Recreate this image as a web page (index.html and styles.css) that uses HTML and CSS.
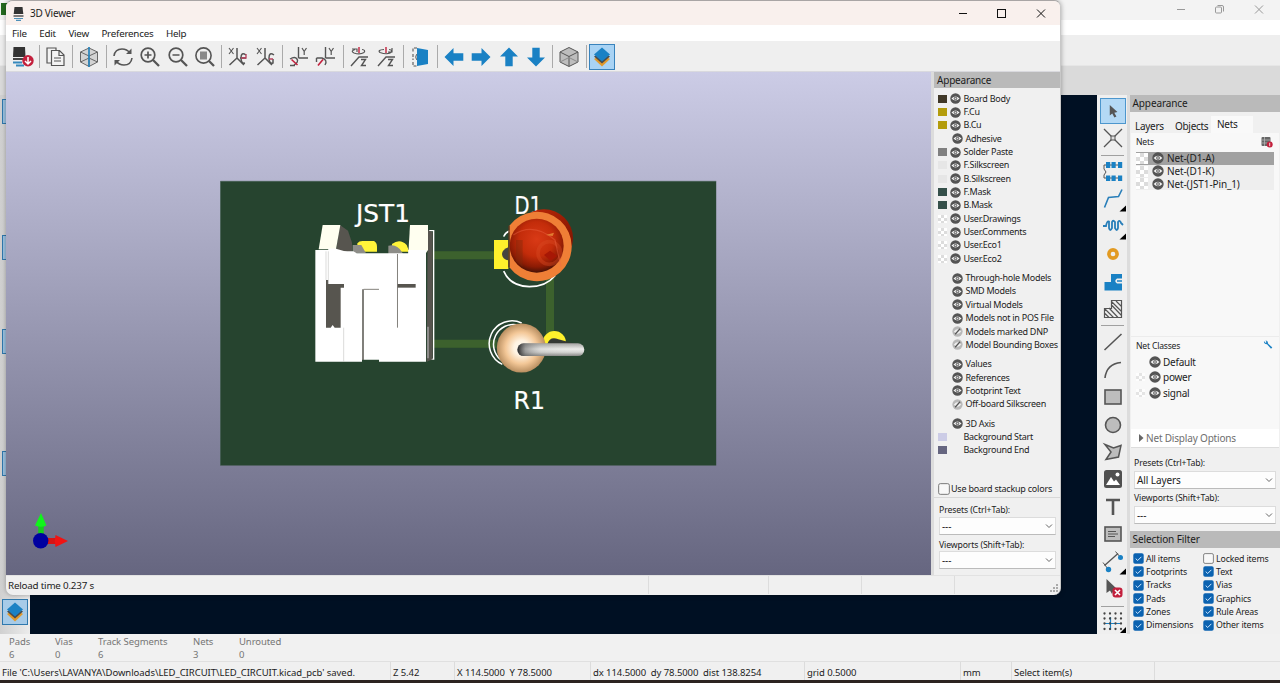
FILE: index.html
```html
<!DOCTYPE html>
<html lang="en">
<head>
<meta charset="utf-8">
<title>3D Viewer</title>
<link rel="stylesheet" href="styles.css">
</head>
<body>
<svg class="defs" width="0" height="0">
  <defs>
    <symbol id="eye" viewBox="0 0 12 12"><circle cx="6" cy="6" r="5.7" fill="#545454"/><path d="M1.6 6Q6 1.4 10.4 6Q6 10.6 1.6 6Z" fill="#f4f4f4"/><circle cx="6" cy="6" r="2" fill="#777"/><circle cx="6" cy="6" r=".8" fill="#ddd"/></symbol>
    <symbol id="off" viewBox="0 0 12 12"><circle cx="6" cy="6" r="5.6" fill="#b9b9b9"/><path d="M2 6Q6 1 10 6Q6 11 2 6Z" fill="#eee"/><path d="M3.400 9L8.800 3" stroke="#555" stroke-width="1.300"/></symbol>
    <symbol id="layers" viewBox="0 0 22 22"><path d="M3 13L11 20.500L19 13L11 8Z" fill="#e29a2c"/><path d="M3 10.500L11 17.500L19 10.500L11 6Z" fill="#4b4b4b"/><path d="M3 8.500L11 1.500L19 8.500L11 15.500Z" fill="#1a81c4"/></symbol>
    <symbol id="chev" viewBox="0 0 8 8"><path d="M1 2.500L4 5.500L7 2.500" fill="none" stroke="#666" stroke-width="1"/></symbol>
    <symbol id="tick" viewBox="0 0 11 11"><rect x=".3" y=".3" width="10.400" height="10.400" rx="1.800" fill="#0b62b0"/><path d="M2.700 5.600L4.700 7.500L8.400 3.800" fill="none" stroke="#d4eaff" stroke-width="1"/></symbol>
    <symbol id="box" viewBox="0 0 11 11"><rect x=".6" y=".6" width="9.800" height="9.800" rx="1.500" fill="#f8f8f8" stroke="#777" stroke-width=".9"/></symbol>
    <symbol id="arrow" viewBox="0 0 22 22"><path d="M1.500 11L10.500 2V7.300H20.300V14.700H10.500V20Z" fill="#1a81c4"/></symbol>
    <linearGradient id="bg" x1="0" y1="0" x2="0" y2="1"><stop offset="0" stop-color="#cccce6"/><stop offset="1" stop-color="#666680"/></linearGradient>
    <radialGradient id="dome" cx=".5" cy=".38" r=".64"><stop offset="0" stop-color="#d93a16"/><stop offset=".5" stop-color="#c32c0a"/><stop offset=".8" stop-color="#8c1b04"/><stop offset="1" stop-color="#3a1006"/></radialGradient>
    <linearGradient id="back" x1="0" y1="0" x2="1" y2="1"><stop offset="0" stop-color="#c62a08"/><stop offset="1" stop-color="#701000"/></linearGradient>
    <radialGradient id="res"><stop offset="0" stop-color="#fffaf0"/><stop offset=".3" stop-color="#fff3e2"/><stop offset=".65" stop-color="#f3c797"/><stop offset="1" stop-color="#b88e60"/></radialGradient>
    <linearGradient id="lead" x1="0" y1="0" x2="0" y2="1"><stop offset="0" stop-color="#a2a2a0"/><stop offset=".45" stop-color="#ececea"/><stop offset=".7" stop-color="#d4d4d2"/><stop offset="1" stop-color="#858583"/></linearGradient>
    <linearGradient id="leadend" x1="0" y1="0" x2="1" y2="0"><stop offset="0" stop-color="#222"/><stop offset=".12" stop-color="#555" stop-opacity=".5"/><stop offset=".35" stop-color="#999" stop-opacity=".15"/><stop offset="1" stop-color="#fff" stop-opacity="0"/></linearGradient>
  </defs>
</svg>

<div class="editor">
  <div class="ed-title">
    <svg width="100" height="19" viewBox="0 0 100 19" fill="none" stroke="#999" stroke-width="1"><path d="M7 9.500h8M85 5.500l8 8M93 5.500l-8 8"/><rect x="45.500" y="7" width="6" height="6" rx="1"/><path d="M47.500 5.500h4.500q1.500 0 1.500 1.500v4.500"/></svg>
  </div>
  <div class="ed-menu"></div>
  <div class="ed-tools"></div>
  <div class="ed-band"></div>
  <div class="ed-body">
    <div class="ed-left"><i></i><i></i><i></i><i></i><b><svg width="22" height="22"><use href="#layers"/></svg></b></div>
    <div class="ed-canvas"></div>
    <div class="ed-right">
      <svg class="on" viewBox="0 0 26 26"><path d="M9.500 6.500V18L12.200 15.700L14.500 20L16.700 19L14.400 14.800L17.800 14Z" fill="#555"/></svg>
      <svg viewBox="0 0 26 26"><path d="M4 4L22 22M22 4L4 22" stroke="#555" stroke-width="1.300"/><rect x="11" y="11" width="4" height="4" fill="#ddd" stroke="#555"/></svg>
      <hr>
      <svg viewBox="0 0 26 26"><path d="M6 6H4V10L6 13L4 16V19H6M10 6h9M10 19h9" fill="none" stroke="#555" stroke-width="1"/><path d="M6 3h4.200v6h-4.200zM11.500 3h4.200v6h-4.200zM18 3h4.200v6h-4.200zM6 16.500h4.200v5.500h-4.200zM11.500 16.500h4.200v5.500h-4.200zM18 16.500h4.200v5.500h-4.200z" fill="#1a81c4"/></svg>
      <svg viewBox="0 0 26 26"><path d="M4.500 21.500L8.500 11.500L18.500 10.500L22 3.500" fill="none" stroke="#287eb9" stroke-width="1.600"/><path d="M26 19.500V25.500H19.500Z" fill="#000"/></svg>
      <svg viewBox="0 0 26 26"><path d="M3 12H6Q7 6.500 9 7.500V14Q10 18 12 14V8Q13 5.500 15 8V14Q17 18 18 14V8Q20 5.500 21 9L23 11" fill="none" stroke="#287eb9" stroke-width="1.800"/><path d="M26 19.500V25.500H19.500Z" fill="#000"/></svg>
      <svg viewBox="0 0 26 26"><circle cx="13" cy="13" r="4.100" fill="none" stroke="#e29a22" stroke-width="3.600"/></svg>
      <svg viewBox="0 0 26 26"><path d="M4.500 13H11V5H22V9.500H17Q13.500 12 17 14.500H22V21.500H4.500Z" fill="#1a81c4"/><path d="M17 12h5" stroke="#1a81c4" stroke-width="1.500"/></svg>
      <svg viewBox="0 0 26 26"><path d="M5 13l8.500 8.500M5 17.500l4 4M11.500 5.500L21.500 15.500M16 5l5.500 5.500M12 9.500l9.500 10M9 12l9 9.500M4.500 12.500H11.500V4.500H21.500V21.500H4.500Z" fill="none" stroke="#555" stroke-width="1.200"/></svg>
      <hr>
      <svg viewBox="0 0 26 26"><path d="M4.500 21L21.500 5" stroke="#555" stroke-width="1.600"/></svg>
      <svg viewBox="0 0 26 26"><path d="M5 21Q6.500 7 21 5.500" fill="none" stroke="#555" stroke-width="1.600"/></svg>
      <svg viewBox="0 0 26 26"><rect x="5" y="6" width="16" height="14" fill="#bdbdbd" stroke="#555" stroke-width="1.600"/></svg>
      <svg viewBox="0 0 26 26"><circle cx="13" cy="13" r="7.500" fill="#bdbdbd" stroke="#555" stroke-width="1.600"/></svg>
      <svg viewBox="0 0 26 26"><path d="M5 5.500L13.500 9L21 6.500L18.500 18L6 20.500L11 13Z" fill="#bdbdbd" stroke="#555" stroke-width="1.500"/></svg>
      <svg viewBox="0 0 26 26"><rect x="4" y="4" width="18" height="18" rx="2.500" fill="#505050"/><path d="M6 19L11 11L14 15.500L16 13.500L20 19Z" fill="#fff"/><circle cx="17.500" cy="8.500" r="2" fill="#fff"/></svg>
      <svg viewBox="0 0 26 26"><path d="M6 6H20M13 6V21" stroke="#555" stroke-width="2.600"/></svg>
      <svg viewBox="0 0 26 26"><rect x="5" y="6" width="16" height="14" fill="#bdbdbd" stroke="#555" stroke-width="1.600"/><path d="M8 10.500h8M8 13h10M8 15.500h7" stroke="#555"/></svg>
      <svg viewBox="0 0 26 26"><path d="M4.500 16.500L18 4.500" stroke="#555" stroke-width="1.400"/><path d="M3 13.500L8 20M15.500 2.500L21 9" stroke="#555"/><circle cx="8.500" cy="20.500" r="2.700" fill="#1a81c4"/><circle cx="20.500" cy="8.500" r="2.500" fill="#1a81c4"/><path d="M26 19.500V25.500H19.500Z" fill="#000"/></svg>
      <svg viewBox="0 0 26 26"><path d="M6.500 3V17L10 14.500L12 18L14 13H17Z" fill="#555"/><rect x="12.500" y="11.500" width="10" height="10" rx="3" fill="#c3203d"/><path d="M15 14l5 5M20 14l-5 5" stroke="#fff" stroke-width="1.600"/></svg>
      <hr>
      <svg viewBox="0 0 26 26"><path d="M10.500 7V20M5 13.500H21" stroke="#1a81c4" stroke-width="1.200"/><path d="M4.500 3.500H24M4.500 8.500H24M4.500 13.500H24M4.500 19H24" stroke="#444" stroke-width="2.300" stroke-linecap="round" stroke-dasharray="0 5.500"/><path d="M26 17V23H20Z" fill="#000"/></svg>
    </div>
    <div class="ed-panel">
      <div class="head">Appearance</div>
      <div class="tabs"><span>Layers</span><span>Objects</span><span class="sel">Nets</span></div>
      <div class="page">
        <div class="sub"><span>Nets</span><svg width="12" height="12" viewBox="0 0 12 12"><rect x=".5" y="1" width="9" height="9" rx="1" fill="#666"/><path d="M1 4h8M1 7h8M3.500 1v9" stroke="#bbb" stroke-width=".7"/><circle cx="8.700" cy="8.500" r="3" fill="#c3203d"/><path d="M8.700 6.800v3.400" stroke="#fff" stroke-width=".8"/></svg></div>
        <div class="nets">
          <div class="net cur"><i class="chk"></i><svg><use href="#eye"/></svg><span>Net-(D1-A)</span></div>
          <div class="net"><i class="chk"></i><svg><use href="#eye"/></svg><span>Net-(D1-K)</span></div>
          <div class="net"><i class="chk"></i><svg><use href="#eye"/></svg><span>Net-(JST1-Pin_1)</span></div>
        </div>
        <div class="classes">
          <div class="sub"><span>Net Classes</span><svg width="10" height="10" viewBox="0 0 10 10"><path d="M1 1Q.5 4 4 4.300L8 8.700L9.300 7.500L5 3.500Q5 .8 2.500.6L3.500 2L2.500 3Z" fill="#1a81c4"/></svg></div>
          <div class="cls"><i></i><svg><use href="#eye"/></svg><span>Default</span></div>
          <div class="cls"><i class="chk"></i><svg><use href="#eye"/></svg><span>power</span></div>
          <div class="cls"><i class="chk"></i><svg><use href="#eye"/></svg><span>signal</span></div>
        </div>
        <div class="ndo"><svg width="5" height="8"><path d="M0 0L4.500 4L0 8Z" fill="#666"/></svg><span>Net Display Options</span></div>
      </div>
      <div class="fields">
        <label>Presets (Ctrl+Tab):</label>
        <div class="combo"><span>All Layers</span><svg><use href="#chev"/></svg></div>
        <label>Viewports (Shift+Tab):</label>
        <div class="combo"><span>---</span><svg><use href="#chev"/></svg></div>
      </div>
      <div class="head filt">Selection Filter</div>
      <div class="checks">
        <div><svg><use href="#tick"/></svg>All items</div><div><svg><use href="#box"/></svg>Locked items</div>
        <div><svg><use href="#tick"/></svg>Footprints</div><div><svg><use href="#tick"/></svg>Text</div>
        <div><svg><use href="#tick"/></svg>Tracks</div><div><svg><use href="#tick"/></svg>Vias</div>
        <div><svg><use href="#tick"/></svg>Pads</div><div><svg><use href="#tick"/></svg>Graphics</div>
        <div><svg><use href="#tick"/></svg>Zones</div><div><svg><use href="#tick"/></svg>Rule Areas</div>
        <div><svg><use href="#tick"/></svg>Dimensions</div><div><svg><use href="#tick"/></svg>Other items</div>
      </div>
    </div>
  </div>
  <div class="stats">
    <div>Pads<b>6</b></div><div>Vias<b>0</b></div><div>Track Segments<b>6</b></div><div>Nets<b>3</b></div><div>Unrouted<b>0</b></div>
  </div>
  <div class="status">
    <span class="file">File 'C:\Users\LAVANYA\Downloads\LED_CIRCUIT\LED_CIRCUIT.kicad_pcb' saved.</span><span>Z 5.42</span><span>X 114.5000&nbsp; Y 78.5000</span><span>dx 114.5000&nbsp; dy 78.5000&nbsp; dist 138.8254</span><span>grid 0.5000</span><span>mm</span><span>Select item(s)</span><span></span>
  </div>
  <div class="taskbar"></div>
</div>
<div class="app-icon"></div>

<div class="viewer">
  <div class="v-title">
    <svg width="13" height="15" viewBox="0 0 13 15"><path d="M2.500 1h8l.8 7H1.700Z" fill="#333"/><path d="M1.500 10h10" stroke="#555" stroke-width="1.500"/><path d="M2 12.500h9M4 14.300h5" stroke="#4c8fb8" stroke-width="1.200"/></svg>
    <span>3D Viewer</span>
    <svg class="wc" width="100" height="24" viewBox="0 0 100 24" fill="none" stroke="#111" stroke-width="1"><path d="M3 12.500h8M81 8.500l8 8M89 8.500l-8 8"/><rect x="41.500" y="8.500" width="8" height="8"/></svg>
  </div>
  <div class="v-menu"><span>File</span><span>Edit</span><span>View</span><span>Preferences</span><span>Help</span></div>
  <div class="v-tools">
    <svg viewBox="0 0 22 22"><path d="M1.500 1h11.500l.5 10H1Z" fill="#333"/><path d="M1 13h11" stroke="#444" stroke-width="2"/><path d="M1 16.500h9M4 19.500h8" stroke="#3789bd" stroke-width="1.800"/><circle cx="16" cy="14.800" r="5.700" fill="#c3203d"/><path d="M16 11v6.500M13 15l3 3l3-3" fill="none" stroke="#fff" stroke-width="1.500"/></svg>
    <hr>
    <svg viewBox="0 0 22 22" fill="#f3f3f3" stroke="#555" stroke-width="1.200"><path d="M6 17H2V2h9v3"/><path d="M6.500 4.500h8l4.500 4.500v10.500h-12.500zM14 5v4.500h5"/><path d="M9 12h7M9 15h7"/></svg>
    <hr>
    <svg viewBox="0 0 22 22" stroke="#666" stroke-width="1"><path d="M2.500 6L11 2L19.500 6V16L11 20.500L2.500 16Z" fill="#d3d3d3"/><path d="M2.500 6L11 10L19.500 6M11 10V20M2.500 16L11 12L19.500 16" fill="none"/><path d="M11 1V21" stroke="#2783bb" stroke-width="1.700"/></svg>
    <hr>
    <svg viewBox="0 0 22 22" fill="none" stroke="#555" stroke-width="1.600"><path d="M2 10Q3 3 10 3Q15 3 18 7M20 12Q19 19 12 19Q7 19 4 15"/><path d="M19.500 2.500V8H14ZM2.500 19.500V14H8Z" fill="#555" stroke="none"/></svg>
    <svg viewBox="0 0 22 22" fill="none" stroke="#555" stroke-width="1.700"><circle cx="9" cy="9" r="6.800"/><path d="M14 14L20 20" stroke-width="2.300"/><path d="M5.500 9h7M9 5.500v7"/></svg>
    <svg viewBox="0 0 22 22" fill="none" stroke="#555" stroke-width="1.700"><circle cx="9" cy="9" r="6.800"/><path d="M14 14L20 20" stroke-width="2.300"/><path d="M5.500 9h7"/></svg>
    <svg viewBox="0 0 22 22" fill="none" stroke="#555" stroke-width="1.600"><circle cx="9.500" cy="9.500" r="7.600"/><path d="M15 15L20 20" stroke-width="2.300"/><rect x="6" y="5.500" width="7" height="8" fill="#888" stroke="none"/></svg>
    <hr>
    <svg viewBox="0 0 22 22" fill="none" stroke="#555" stroke-width="1.500"><path d="M2 2l4.500 6M6.500 2L2 8" stroke-width="1.100"/><path d="M10 2V12L2.500 19M10 12L17 19"/><path d="M19 9Q14 5.500 14 12Q14 18 18 17M13 12h6"/><path d="M14 12h5V8" stroke="#b8405c" stroke-width="1.300"/></svg>
    <svg viewBox="0 0 22 22" fill="none" stroke="#555" stroke-width="1.500"><path d="M2 2l4.500 6M6.500 2L2 8" stroke-width="1.100"/><path d="M10 2V12L2.500 19M10 12L17 19"/><path d="M19 9Q14 5.500 14 12Q14 18 18 17V13"/><path d="M14 13h4" stroke="#b8405c" stroke-width="1.300"/></svg>
    <hr>
    <svg viewBox="0 0 22 22" fill="none" stroke="#555" stroke-width="1.400"><path d="M10.500 1V12M10.500 12H20"/><path d="M14 2l2.200 3.500L18.500 2M16.200 5.500V9" stroke-width="1.200"/><path d="M2 13Q7 10 9 13T6 19M2 19.500h5"/><path d="M3.500 13.500L9.500 19" stroke="#c3203d" stroke-width="1.600"/></svg>
    <svg viewBox="0 0 22 22" fill="none" stroke="#555" stroke-width="1.400"><path d="M10.500 1V12M10.500 12H20"/><path d="M14 2l2.200 3.500L18.500 2M16.200 5.500V9" stroke-width="1.200"/><path d="M1.500 12H7Q13 14 10 19M1.500 12v4"/><path d="M3 19.500L8 13.500" stroke="#c3203d" stroke-width="1.600"/></svg>
    <hr>
    <svg viewBox="0 0 22 22" fill="none" stroke="#555" stroke-width="1.400"><path d="M2 20L10 11H19M12 13.500h4.500l-4 6H17" /><path d="M6 3.500Q1 5 5 7Q11 9 15 6.500Q17 4 13 3.500M3 3h5v3" stroke-width="1.200"/><path d="M10 1V7" stroke="#c3203d"/></svg>
    <svg viewBox="0 0 22 22" fill="none" stroke="#555" stroke-width="1.400"><path d="M2 20L10 11H19M12 13.500h4.500l-4 6H17"/><path d="M8 3.500Q1 4 4 6.500Q11 9 15 6.500Q17 4 13 3.500M12 6h4v-4" stroke-width="1.200"/><path d="M10 1V7" stroke="#c3203d"/></svg>
    <hr>
    <svg viewBox="0 0 22 22"><path d="M7 2H3V6M3 8V14M3 16V20H7" fill="none" stroke="#555" stroke-width="1.100" stroke-dasharray="3 1.500"/><path d="M8 7Q3.500 11 8 15" fill="none" stroke="#555"/><path d="M7 2L18 4V18L7 20Z" fill="#1a81c4"/></svg>
    <hr>
    <svg><use href="#arrow"/></svg><svg class="r"><use href="#arrow"/></svg><svg class="u"><use href="#arrow"/></svg><svg class="d"><use href="#arrow"/></svg>
    <hr>
    <svg viewBox="0 0 22 22" stroke="#555" stroke-width="1"><path d="M2 6L11 1.500L20 6V16L11 20.500L2 16Z" fill="#bdbdbd"/><path d="M2 6L11 10.500L20 6M11 10.500V20" fill="none"/><path d="M2 16L11 11.500L20 16" stroke="#8c8c8c" fill="none"/></svg>
    <hr>
    <svg class="on"><use href="#layers"/></svg>
  </div>
  <div class="v-body">
    <svg class="scene" viewBox="6 72 925 503">
      <rect x="6" y="72" width="925" height="503" fill="url(#bg)"/>
      <rect x="220.500" y="181.300" width="495.700" height="284.200" fill="#26442f"/>
      <path d="M220.500 465.500V181.300H716.200" fill="none" stroke="#3a5948" stroke-width=".6"/>
      <g transform="translate(300 180) scale(.33333)">
        <path d="M398 226H590M398 491H590M750 280V470" stroke="#3c612d" stroke-width="24"/>
        <path d="M387 152H401V537H387" fill="none" stroke="#fff" stroke-width="4"/>
        <!-- connector -->
        <path d="M172 190Q178 182 190 183H222Q231 188 231 200V215H172ZM276 192Q300 174 320 195L328 215H276Z" fill="#fff43a"/>
        <path d="M158 195H184L198 220H158ZM265 197Q290 190 305 215L310 222H265Z" fill="#8d8d88"/>
        <path d="M120 135L144 152L156 188V225H106Z" fill="#57554f"/>
        <path d="M68 135H121L108 208H56Z" fill="#fffff0"/>
        <path d="M383 150L398 156V538L380 545Z" fill="#57554f"/>
        <path d="M330 135H384V210L376 222H325Z" fill="#fffff0"/>
        <path d="M46 210H85V206H108V214H160L170 220H325V210H378V545H237V539H186V545H46Z" fill="#fff"/>
        <path d="M85 300V312H132V323H122V443H104L98 435L92 443H78V300Z" fill="#57554f"/>
        <path d="M86 206H108L150 218V312H86Z" fill="#fff"/>
        <path d="M189 328V540" stroke="#57554f" stroke-width="4.500" fill="none"/>
        <path d="M292.500 222V443M191 328H237" stroke="#6b6962" stroke-width="2.500"/>
        <path d="M293 312H347V323H293Z" fill="#57554f"/>
        <path d="M131 443V545M78 214V300M85 214V312" stroke="#b9b9b6" stroke-width="1.500"/>
        <path d="M384 440V535" stroke="#aaa" stroke-width="4"/>
        <!-- led -->
        <path d="M612 275Q630 318 688 320Q738 320 764 288M612 168Q616 158 628 153" fill="none" stroke="#fff" stroke-width="5" stroke-linecap="round"/>
      </g>
      <text x="514.500" y="213.700" textLength="27.500" lengthAdjust="spacingAndGlyphs">D1</text>
      <text x="356" y="221.500" textLength="54" lengthAdjust="spacingAndGlyphs">JST1</text>
      <text x="513.500" y="409" textLength="31.500" lengthAdjust="spacingAndGlyphs">R1</text>
      <g transform="translate(300 180) scale(.33333)">
        <circle cx="732" cy="175" r="87" fill="url(#back)"/>
        <path d="M628 137A104 104 0 1 1 628 262Z" fill="#ef7f36"/>
        <path d="M582 180H625V267H582Z" fill="#fff12c"/>
        <path d="M625 202Q600 212 608 230Q614 240 625 241Z" fill="#454440"/>
        <path d="M627 137V262" stroke="#5a3520" stroke-width="4"/>
        <circle cx="710" cy="197" r="81" fill="url(#dome)"/>
        <path d="M648 180H668V260L648 245Z" fill="#7c2b0d" opacity=".4"/>
        <circle cx="748" cy="219" r="34" fill="none" stroke="#d94b24" stroke-width="11" opacity=".4"/>
        <path d="M640 165Q700 125 765 180L783 260" fill="none" stroke="#f06a48" stroke-width="4" opacity=".4"/>
        <path d="M732 225L750 212L772 228L752 242Z" fill="#a71705"/>
        <path d="M738 165L762 158L758 168Z" fill="#e8923c" opacity=".8"/>
        <!-- resistor -->
        <path d="M607 553A68 68 0 0 1 665 429M603 540A60 60 0 0 1 655 435" fill="none" stroke="#fff" stroke-width="4.500"/>
        <circle cx="763" cy="488" r="35" fill="#fff12c"/>
        <path d="M742 492Q750 468 775 478L828 492V505H742Z" fill="#353935"/>
        <circle cx="664" cy="504" r="73.500" fill="url(#res)"/>
        <rect x="652" y="490" width="201" height="38" rx="19" fill="url(#lead)"/>
        <rect x="652" y="490" width="201" height="38" rx="19" fill="url(#leadend)"/>
      </g>
      <path d="M41 541V524" stroke="#16ce1c" stroke-width="5.500"/><path d="M41 513L46.500 525.500Q41 528 35 525.500Z" fill="#11f51b"/><path d="M46 541H57" stroke="#d51515" stroke-width="6"/><path d="M68 541L55.500 547Q54 541 55.500 535Z" fill="#f01313"/><circle cx="40.700" cy="540.800" r="7.700" fill="#0000a0"/>
    </svg>
    <div class="v-panel">
      <div class="head">Appearance</div>
      <div class="rows">
        <div><i class="c-body"></i><svg><use href="#eye"/></svg>Board Body</div>
        <div><i class="c-cu"></i><svg><use href="#eye"/></svg>F.Cu</div>
        <div><i class="c-cu"></i><svg><use href="#eye"/></svg>B.Cu</div>
        <div class="in"><svg><use href="#eye"/></svg>Adhesive</div>
        <div><i class="c-paste"></i><svg><use href="#eye"/></svg>Solder Paste</div>
        <div><i class="c-silk"></i><svg><use href="#eye"/></svg>F.Silkscreen</div>
        <div><i class="c-silk"></i><svg><use href="#eye"/></svg>B.Silkscreen</div>
        <div><i class="c-mask"></i><svg><use href="#eye"/></svg>F.Mask</div>
        <div><i class="c-mask"></i><svg><use href="#eye"/></svg>B.Mask</div>
        <div><i class="chk"></i><svg><use href="#eye"/></svg>User.Drawings</div>
        <div><i class="chk"></i><svg><use href="#eye"/></svg>User.Comments</div>
        <div><i class="chk"></i><svg><use href="#eye"/></svg>User.Eco1</div>
        <div><i class="chk"></i><svg><use href="#eye"/></svg>User.Eco2</div>
      </div>
      <div class="rows">
        <div class="in"><svg><use href="#eye"/></svg>Through-hole Models</div>
        <div class="in"><svg><use href="#eye"/></svg>SMD Models</div>
        <div class="in"><svg><use href="#eye"/></svg>Virtual Models</div>
        <div class="in"><svg><use href="#eye"/></svg>Models not in POS File</div>
        <div class="in"><svg><use href="#off"/></svg>Models marked DNP</div>
        <div class="in"><svg><use href="#off"/></svg>Model Bounding Boxes</div>
      </div>
      <div class="rows">
        <div class="in"><svg><use href="#eye"/></svg>Values</div>
        <div class="in"><svg><use href="#eye"/></svg>References</div>
        <div class="in"><svg><use href="#eye"/></svg>Footprint Text</div>
        <div class="in"><svg><use href="#off"/></svg>Off-board Silkscreen</div>
      </div>
      <div class="rows">
        <div class="in"><svg><use href="#eye"/></svg>3D Axis</div>
        <div><i class="c-start"></i><svg></svg>Background Start</div>
        <div><i class="c-end"></i><svg></svg>Background End</div>
      </div>
      <div class="stackup"><svg width="12" height="12"><use href="#box"/></svg>Use board stackup colors</div>
      <div class="fields">
        <label>Presets (Ctrl+Tab):</label>
        <div class="combo"><span>---</span><svg><use href="#chev"/></svg></div>
        <label>Viewports (Shift+Tab):</label>
        <div class="combo"><span>---</span><svg><use href="#chev"/></svg></div>
      </div>
    </div>
  </div>
  <div class="v-status"><span class="msg">Reload time 0.237 s</span><span></span><span></span><span></span><span class="grip"><svg width="9" height="9" fill="#aaa"><path d="M6 0h2v2h-2zM3 3h2v2h-2zM6 3h2v2h-2zM0 6h2v2h-2zM3 6h2v2h-2zM6 6h2v2h-2z"/></svg></span></div>
</div>
</body>
</html>
```
FILE: styles.css
```css
* { box-sizing: border-box; }
html, body { margin: 0; width: 1280px; height: 683px; overflow: hidden; }
body { position: relative; font: 10px/12px "Noto Sans", "Open Sans", sans-serif; color: #1c1c1c; letter-spacing: -.2px; white-space: nowrap; }
.defs { position: absolute; }
svg { display: block; flex: none; }
hr { margin: 0; border: 0; flex: none; }

/* editor window */
.editor { width: 1280px; height: 683px; display: flex; flex-direction: column; background: #f0f0f0; }
.ed-title { height: 20px; background: #f3f3f3; display: flex; justify-content: flex-end; padding-right: 10px; }
.ed-menu { height: 15px; background: #fff; }
.ed-tools { height: 31px; background: #eee; border-bottom: 1px solid #e6e6e6; }
.ed-band { height: 29px; background: #dadada; }
.ed-body { height: 539px; display: flex; }
.ed-left { width: 30px; padding: 4px 0 0 2px; background: linear-gradient(90deg, #d0d0d0, #ececec); }
.ed-left i, .ed-left b { display: block; width: 25px; height: 25px; border: 1px solid #3079ae; background: #9cc3e2; }
.ed-left i:nth-child(1) { margin-bottom: 111px; }
.ed-left i:nth-child(2) { margin-bottom: 69px; }
.ed-left i:nth-child(3) { margin-bottom: 97px; }
.ed-left i:nth-child(4) { margin-bottom: 123px; }
.ed-left b { padding: 1px; background: #a7cbe8; width: 26px; height: 26px; }
.ed-canvas { width: 1067px; background: #001023; }
.ed-right { width: 30px; background: #efefef; display: flex; flex-direction: column; align-items: center; padding: 3px 0 0 1px; overflow: hidden; }
.ed-right svg { width: 26px; height: 26px; margin-bottom: 1.430px; }
.ed-right hr + svg, .ed-right hr { margin-top: 2px; }
.ed-right svg.on { border: 1px solid #4c96cd; background: #b4d9f5; }
.ed-right hr { width: 23px; height: 1px; background: #a0a0a0; margin-bottom: 1px; }
.ed-panel { width: 153px; border-left: 3px solid #dcdcdc; background: #f0f0f0; }
.head { height: 17px; line-height: 17px; padding-left: 3px; background: #bababa; font-size: 10px; letter-spacing: -.1px; }
.ed-panel .head { padding-left: 2.500px; }
.tabs { height: 21px; display: flex; padding: 5px 0 0 1px; }
.tabs span { height: 16px; line-height: 18px; padding: 0 4px; width: 40px; letter-spacing: -.3px; }
.tabs .sel { margin-top: -1px; height: 17px; width: 42px; padding-left: 6px; line-height: 17px; background: #f9f9f9; }
.page { height: 315px; width: 148px; margin-left: 1px; background: #f8f8f8; border-bottom: 1px solid #ddd; }
.sub { display: flex; justify-content: space-between; padding: 3px 6px 0 5px; height: 19px; font-size: 8.600px; }
.nets { height: 184px; padding-left: 5px; }
.net { display: flex; align-items: center; height: 12.700px; width: 138px; background: #eee; letter-spacing: -.12px; }
.net.cur { background: #a1a1a1; }
.net svg, .cls svg { width: 12px; height: 12px; margin: 0 2px 0 4px; }
.net span { margin-left: 1px; }
.chk { background: repeating-conic-gradient(#dcdcdc 0 25%, #fff 0 50%) 0 0 / 6px 6px; }
.net .chk { width: 12px; height: 11px; background-size: 8px 8px; }
.classes { height: 93px; border-top: 1px solid #ececec; }
.classes .sub { height: 17px; padding-top: 2.500px; }
.cls { display: flex; align-items: center; height: 15.500px; padding-left: 5px; letter-spacing: -.25px; }
.cls i { width: 9px; height: 8px; }
.cls .chk { opacity: .7; }
.ndo { height: 18px; display: flex; align-items: center; gap: 2px; padding-left: 8px; background: #fff; color: #6e6e6e; letter-spacing: -.18px; }
.fields label { display: block; font-size: 8.700px; line-height: 12px; letter-spacing: -.13px; }
.fields { padding: 9px 4px 0; height: 83px; }
.fields .combo { margin: 1.500px 0 3.500px; height: 18px; display: flex; align-items: center; justify-content: space-between; padding: 0 2px; background: #fdfdfd; border: 1px solid #dcdcdc; border-bottom-color: #bbb; letter-spacing: -.1px; }
.combo svg { width: 8px; height: 8px; }
.checks { display: grid; grid-template-columns: 70px 1fr; grid-auto-rows: 13.330px; padding: 4px 0 0 3px; font-size: 8.800px; letter-spacing: -.15px; }
.checks div { display: flex; align-items: center; gap: 2px; }
.checks svg { width: 11px; height: 11px; }
.stats { height: 27px; display: flex; color: #757575; font-size: 9.500px; line-height: 13px; padding: 1px 0 0 9px; background: #f1f1f1; letter-spacing: -.08px; }
.stats b { display: block; font-weight: 400; }
.stats div:nth-child(1) { width: 46px; }
.stats div:nth-child(2) { width: 43px; }
.stats div:nth-child(3) { width: 95px; }
.stats div:nth-child(4) { width: 46px; }
.status { height: 19px; border-top: 1px solid #e0e0e0; display: flex; line-height: 21px; font-size: 9.500px; letter-spacing: -.08px; }
.status span { border-left: 1px solid #dcdcdc; padding-left: 2px; }
.status .file { width: 390px; border: 0; letter-spacing: -.04px; }
.status span:nth-child(2) { width: 64px; }
.status span:nth-child(3) { width: 136px; }
.status span:nth-child(4) { width: 214px; }
.status span:nth-child(5) { width: 156px; }
.status span:nth-child(6) { width: 51px; }
.status span:nth-child(7) { width: 143px; }
.taskbar { height: 3px; background: #2c2320; }
.app-icon { position: absolute; left: 1px; top: 3px; width: 8px; height: 12px; background: #246b20; }

/* 3D viewer window, floating over the editor */
.viewer { position: absolute; left: 6px; top: 0; width: 1055px; height: 595px; display: flex; flex-direction: column; border-top: 1px solid #a9a5a5; border-right: 1px solid #c8c8c8; border-radius: 7px; overflow: hidden; background: #f0f0f0; box-shadow: 0 0 5px rgba(0, 0, 0, .35); }
.v-title { height: 24px; display: flex; align-items: center; background: #f9f0ed; padding-left: 6px; }
.v-title span { margin-left: 5px; flex: 1; letter-spacing: -.25px; }
.wc { margin-right: 4px; }
.v-menu { height: 16px; display: flex; gap: 12.500px; padding-left: 6px; background: #fff; line-height: 17px; font-size: 9.800px; letter-spacing: -.23px; }
.v-tools { height: 31px; display: flex; align-items: center; padding: 1px 0 0 3px; background: #efefef; border-bottom: 1px solid #d9d9de; }
.v-tools svg { width: 22px; height: 22px; margin: 0 2.700px; }
.v-tools hr { width: 1px; height: 23px; background: #aaa; margin: 0 2.500px; }
.v-tools .on { width: 26px; height: 26px; margin: 0 .2px; padding: 1px; background: #a9d3f4; border: 1px solid #3983bc; }
.v-tools .r { transform: scaleX(-1); }
.v-tools .u { transform: rotate(90deg); }
.v-tools .d { transform: rotate(-90deg); }
.v-body { height: 503px; display: flex; }
.scene { width: 925px; height: 503px; }
.scene text { font-family: "DejaVu Sans", sans-serif; font-size: 24px; fill: #fff; letter-spacing: 0; stroke: #fff; stroke-width: .2px; }
.v-panel { flex: 1; border-left: 3px solid #dcdcdc; }
.v-panel .head { height: 16px; line-height: 16px; margin-bottom: 4px; letter-spacing: -.2px; }
.rows { margin-bottom: 6px; font-size: 9px; letter-spacing: -.27px; }
.rows div { height: 13.350px; display: flex; align-items: center; padding-left: 3.500px; }
.rows i { width: 9px; height: 8px; }
.rows svg { width: 11px; height: 11px; margin: 0 3px; }
.rows .in { padding-left: 14.500px; }
.c-body { background: #403828; }
.c-cu { background: #b39c0c; }
.c-paste { background: #808080; }
.c-silk { background: #e6e6e6; }
.c-mask { background: #35504a; }
.c-start { background: #cccce6; }
.c-end { background: #666680; }
.stackup { display: flex; align-items: center; gap: 1px; margin-top: 25px; height: 15px; padding-left: 4px; font-size: 9px; letter-spacing: -.23px; }
.v-panel .fields { border-top: 1px solid #d8d8d8; padding: 6.500px 4px 0 5px; }
.v-panel .combo { margin: .5px 0 4px; }
.v-status { height: 19px; border-top: 1px solid #e2e2e2; display: flex; line-height: 20px; }
.v-status span { width: 93px; border-left: 1px solid #ddd; }
.v-status .msg { width: 642px; padding-left: 2px; border: 0; font-size: 9.800px; }
.v-status span:nth-child(2) { width: 120px; }
.v-status .grip { flex: 1; display: flex; justify-content: flex-end; align-items: flex-end; padding: 0 1px 1px; }
```
